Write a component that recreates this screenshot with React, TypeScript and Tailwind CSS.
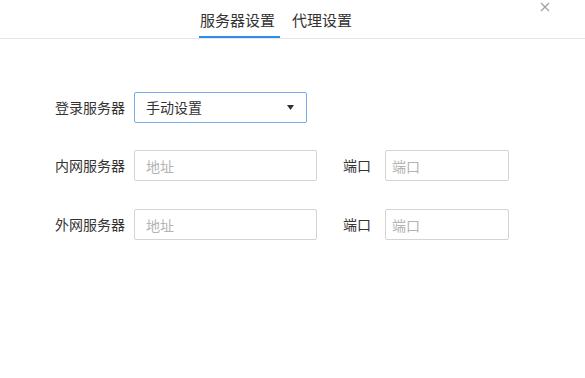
const font = { fontFamily: '"Noto Sans CJK SC", "Noto Sans", sans-serif' };

function Field({ placeholder, className }: { placeholder: string; className: string }) {
  return (
    <input
      type="text"
      placeholder={placeholder}
      className={`${className} h-[31px] rounded-[2px] border border-[#d4d4d4] bg-white text-[14px] text-[#333] outline-none placeholder:text-[#b3b3b3]`}
    />
  );
}

function ServerRow({ label }: { label: string }) {
  return (
    <div className="flex items-center">
      <span className="w-[79px] text-[14px] text-[#333]">{label}</span>
      <Field placeholder="地址" className="w-[183px] px-[11px]" />
      <span className="ml-[26px] w-[42px] text-[14px] text-[#333]">端口</span>
      <Field placeholder="端口" className="w-[124px] px-[6px]" />
    </div>
  );
}

export default function App() {
  return (
    <div className="relative h-[378px] w-[585px] bg-white" style={font}>
      <div className="flex h-[39px] border-b border-[#e6e6e6] pl-[199px]">
        <div className="flex w-[81px] flex-col">
          <span className="mt-[9px] pl-[1px] text-[15px] leading-[22px] text-[#333]">服务器设置</span>
          <div className="mt-auto h-[2px] bg-[#2e8be6]" />
        </div>
        <span className="ml-[12px] mt-[9px] text-[15px] leading-[22px] text-[#333]">代理设置</span>
      </div>
      <button
        type="button"
        className="absolute right-[35px] top-[2px] flex h-[10px] w-[10px] items-center justify-center"
      >
        <svg width="10" height="10" viewBox="0 0 10 10" stroke="#a0a0a0" strokeWidth="1.3">
          <path d="M1 1 L9 9 M9 1 L1 9" />
        </svg>
      </button>

      <div className="pl-[55px] pt-[53px]">
        <div className="flex items-center">
          <span className="w-[79px] text-[14px] text-[#333]">登录服务器</span>
          <div className="flex h-[31px] w-[173px] items-center justify-between rounded-[2px] border border-[#78aee6] pl-[11px] pr-[12px]">
            <span className="text-[14px] text-[#333]">手动设置</span>
            <svg width="7" height="5" viewBox="0 0 7 5">
              <path d="M0 0 H7 L3.5 5 Z" fill="#333" />
            </svg>
          </div>
        </div>
        <div className="mt-[27px]">
          <ServerRow label="内网服务器" />
        </div>
        <div className="mt-[28px]">
          <ServerRow label="外网服务器" />
        </div>
      </div>
    </div>
  );
}
